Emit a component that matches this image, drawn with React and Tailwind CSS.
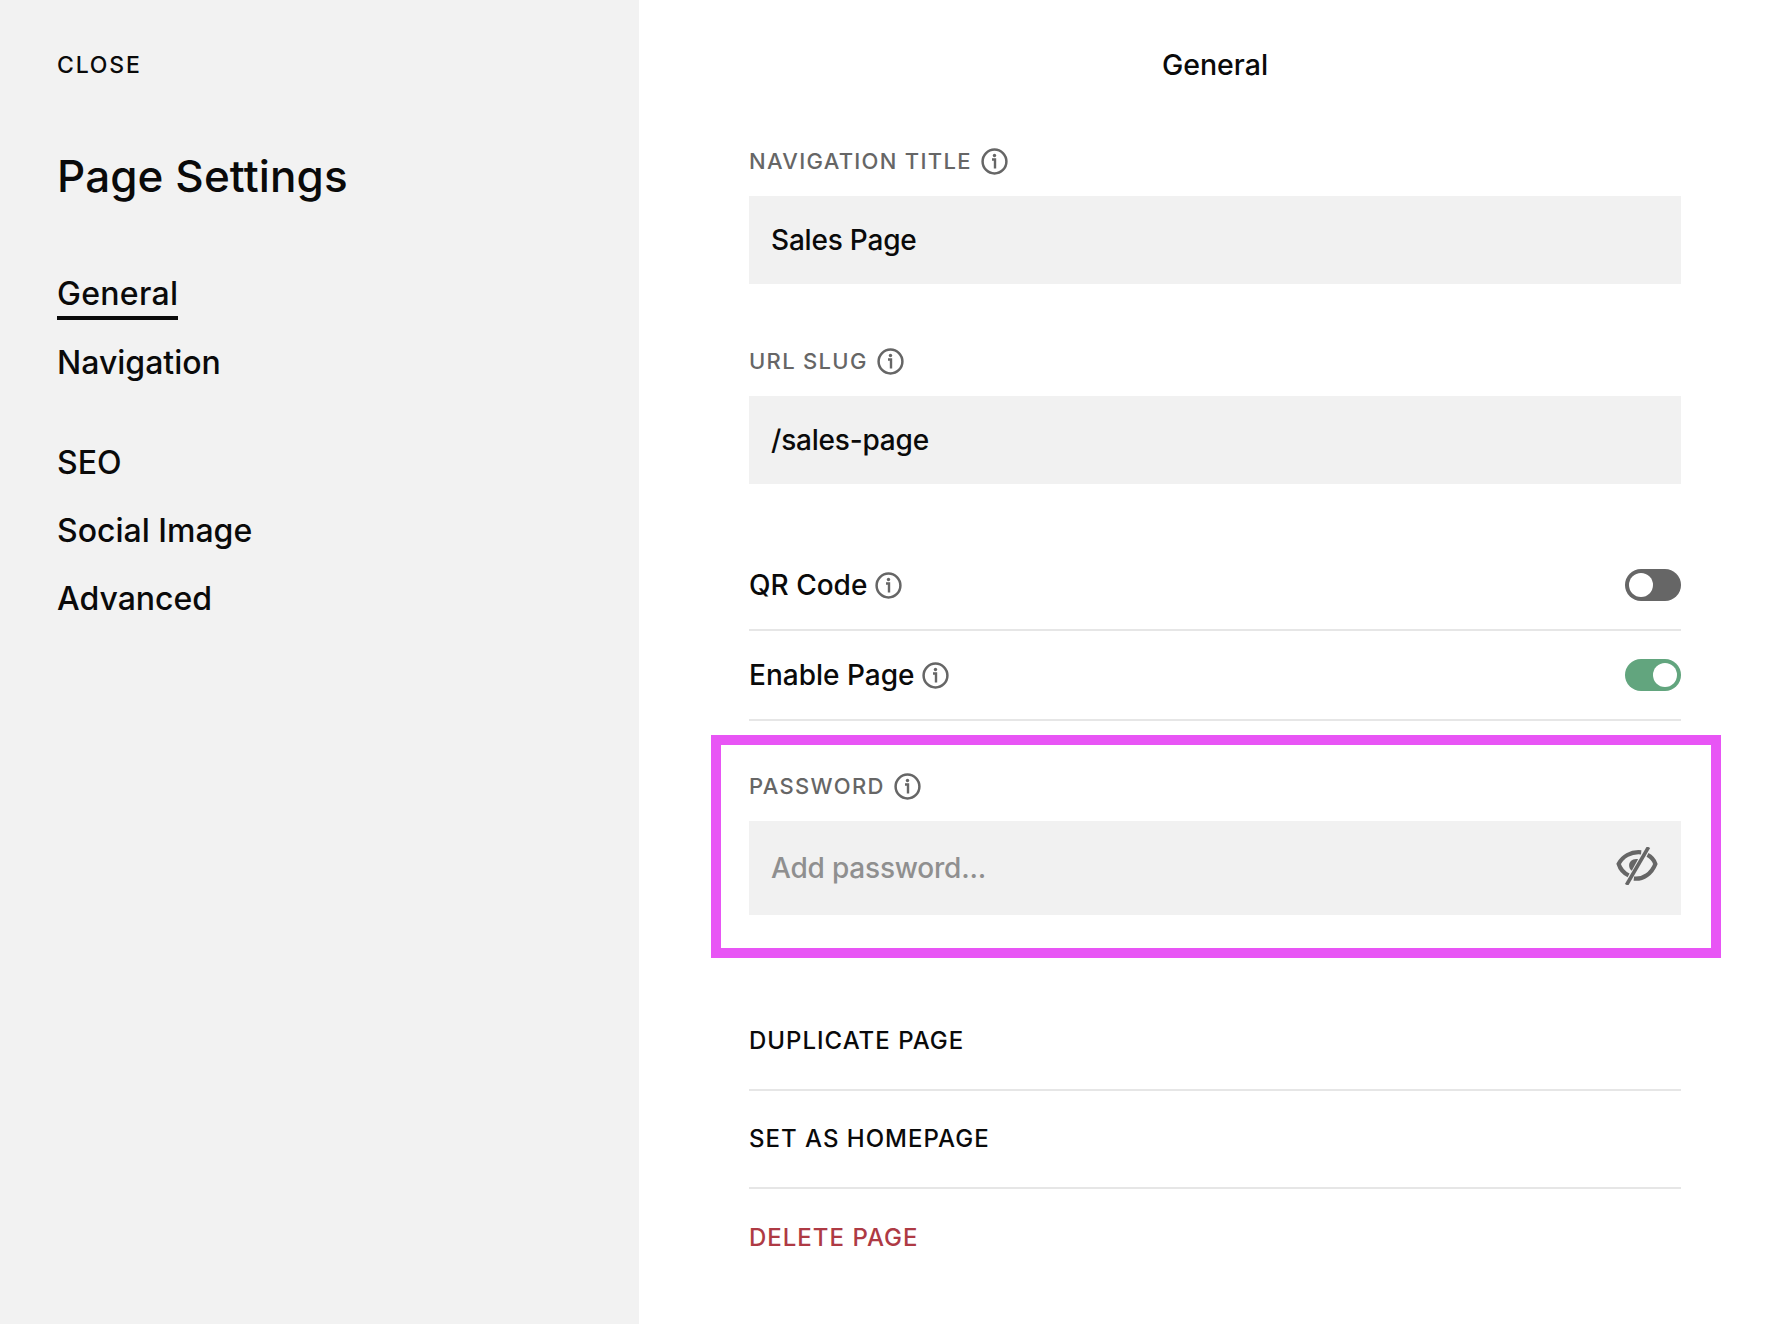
import React from 'react';

const InfoIcon = () => (
  <svg width="27" height="27" viewBox="0 0 27 27" fill="none" stroke="#666" className="shrink-0">
    <circle cx="13.5" cy="13.5" r="11.9" strokeWidth="2.5" />
    <path d="M11 11.5H14V20.5" strokeWidth="2.4" />
    <circle cx="13.5" cy="7.5" r="1.7" fill="#666" stroke="none" />
  </svg>
);

const EyeOffIcon = () => (
  <svg width="42" height="38" viewBox="0 0 40 36" fill="none" stroke="#666" strokeWidth="4" className="-mt-[5px]">
    <path d="M24 5C14 4 6 9 2.5 16C4 21 8 25 12 27" />
    <path d="M17 30C26 31 34 25 37.5 16C36 12 33 9 30 7.5" />
    <path d="M31 0L10 36" strokeWidth="3.5" />
    <path d="M21 11.5C16 10.5 12 14 12.5 18C12.8 20 13.5 21.5 15 22.5Z" fill="#666" stroke="none" />
  </svg>
);

const Toggle = ({ on }) => (
  <div className={`flex h-8 w-14 items-center rounded-full p-1 ${on ? 'justify-end bg-[#62a57e]' : 'justify-start bg-[#666666]'}`}>
    <div className="h-6 w-6 rounded-full bg-white" />
  </div>
);

const FieldLabel = ({ children }) => (
  <div className="flex h-8 items-center gap-[9px] pb-[2px] text-[22px] font-medium tracking-[1.3px] text-[#666666]">
    {children}
    <InfoIcon />
  </div>
);

const TextField = ({ value }) => (
  <input
    readOnly
    value={value}
    className="mt-[18px] block h-[88px] w-full bg-[#f1f1f1] px-[22px] text-[28px] font-medium tracking-[-0.2px] text-[#0a0a0a] outline-none"
  />
);

const ToggleRow = ({ label, on }) => (
  <div className="flex h-[90px] items-center justify-between border-b-2 border-[#e6e6e6]">
    <div className="flex items-center gap-[8px] text-[28px] font-medium text-[#0a0a0a]">
      {label}
      <InfoIcon />
    </div>
    <Toggle on={on} />
  </div>
);

const ActionRow = ({ label, danger, last }) => (
  <div className={`flex h-[98px] items-center text-[24px] font-medium tracking-[1px] ${danger ? 'text-[#ae3a44]' : 'text-[#0a0a0a]'} ${last ? '' : 'border-b-2 border-[#e6e6e6]'}`}>
    {label}
  </div>
);

const NavLink = ({ label, active }) => (
  <div className="flex h-[68px] items-center">
    <span className={`text-[32px] font-medium leading-[40px] text-[#0a0a0a] ${active ? 'mt-[4px] border-b-4 border-[#0a0a0a] pb-[2px] tracking-[0.3px]' : ''}`}>
      {label}
    </span>
  </div>
);

export default function App() {
  return (
    <div className="flex h-[1324px] w-full overflow-hidden bg-white font-['Inter',sans-serif]">
      {/* Sidebar */}
      <aside className="w-[639px] shrink-0 bg-[#f2f2f2] pl-[57px]">
        <div className="pt-[51px] text-[23px] font-medium leading-[28px] tracking-[1.8px] text-[#0a0a0a]">CLOSE</div>
        <h1 className="mt-[65px] text-[44px] font-medium leading-[64px] tracking-[0.1px] text-[#0a0a0a]">Page Settings</h1>
        <nav className="mt-[53px]">
          <NavLink label="General" active />
          <NavLink label="Navigation" />
          <div className="mt-[32px]">
            <NavLink label="SEO" />
            <NavLink label="Social Image" />
            <NavLink label="Advanced" />
          </div>
        </nav>
      </aside>

      {/* Main panel */}
      <main className="flex-1 pl-[110px] pr-[97px]">
        <div className="flex h-[131px] items-center justify-center text-[28.5px] font-medium text-[#0a0a0a]">General</div>

        <div className="mt-[15px]">
          <FieldLabel>NAVIGATION TITLE</FieldLabel>
          <TextField value="Sales Page" />
        </div>

        <div className="mt-[62px]">
          <FieldLabel>URL SLUG</FieldLabel>
          <TextField value="/sales-page" />
        </div>

        <div className="mt-[57px]">
          <ToggleRow label="QR Code" />
          <ToggleRow label="Enable Page" on />
        </div>

        <div className="-ml-[38px] -mr-[40px] mt-[14px] border-[10px] border-[#e855f5] pb-[33px] pl-[28px] pr-[30px] pt-[26px]">
          <FieldLabel>PASSWORD</FieldLabel>
          <div className="mt-[18px] flex h-[94px] items-center justify-between bg-[#f1f1f1] pl-[22px] pr-[23px]">
            <input
              placeholder="Add password..."
              className="w-[500px] bg-transparent text-[28px] font-medium tracking-[-0.2px] outline-none placeholder:text-[#8f8f8f]"
            />
            <EyeOffIcon />
          </div>
        </div>

        <div className="mt-[35px]">
          <ActionRow label="DUPLICATE PAGE" />
          <ActionRow label="SET AS HOMEPAGE" />
          <ActionRow label="DELETE PAGE" danger last />
        </div>
      </main>
    </div>
  );
}
